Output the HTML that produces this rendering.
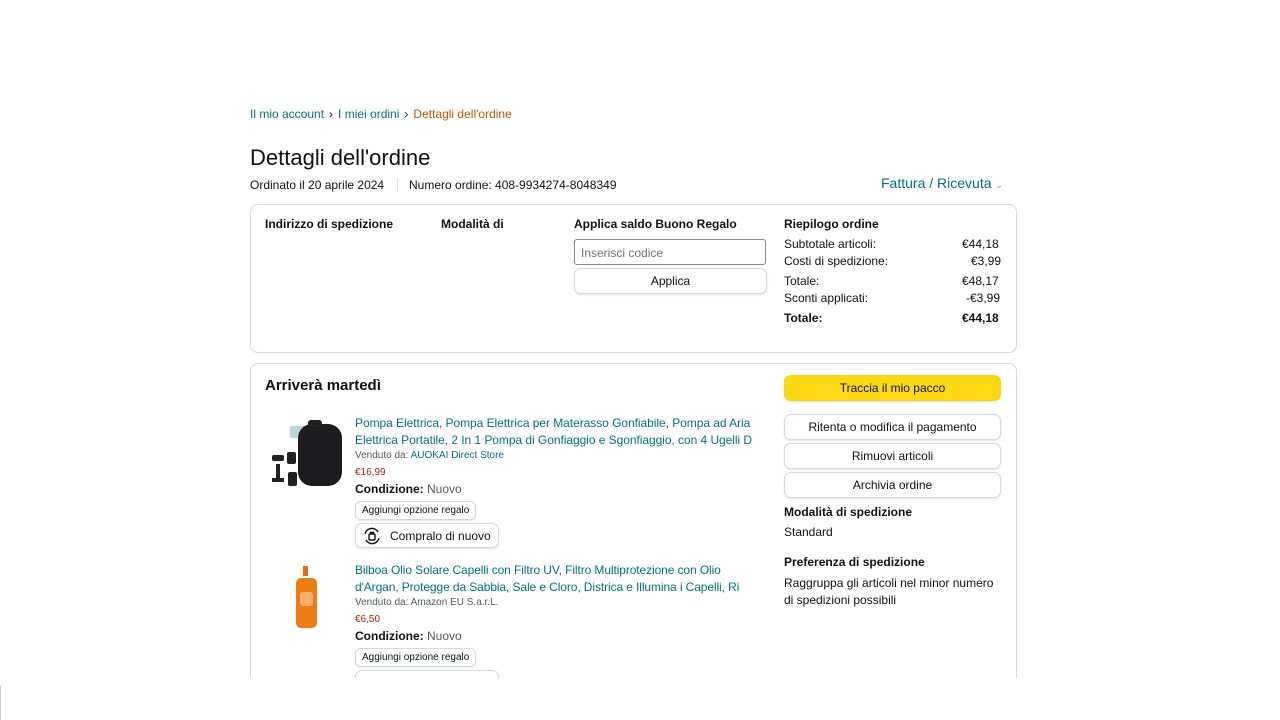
<!DOCTYPE html>
<html><head><meta charset="utf-8"><style>
*{box-sizing:border-box;margin:0;padding:0}
body{width:1280px;height:720px;background:#fff;font-family:"Liberation Sans",Arial,sans-serif;color:#0f1111;position:relative;overflow:hidden;font-size:12px}
.a{position:absolute;white-space:nowrap}
.link{color:#007185}
.box{position:absolute;border:1px solid #d5d9d9;border-radius:8px;background:#fff}
.btn{position:absolute;border:1px solid #d5d9d9;border-radius:7px;background:#fff;text-align:center;font-size:12px;box-shadow:0 1px 2px rgba(15,17,17,.12)}
.b{font-weight:bold}
.pill{position:absolute;border:1px solid #d5d9d9;border-radius:6px;font-size:10px;padding:3px 6px;box-shadow:0 1px 2px rgba(15,17,17,.1)}
.sep{margin:0 5px}
</style></head><body>
<div class="a" style="left:250px;top:107px;font-size:12px"><span class="link">Il mio account</span><span class="sep">›</span><span class="link">I miei ordini</span><span class="sep">›</span><span style="color:#c45500">Dettagli dell'ordine</span></div>
<div class="a" style="left:250px;top:145px;font-size:22px">Dettagli dell'ordine</div>
<div class="a" style="left:250px;top:178px;font-size:12px">Ordinato il 20 aprile 2024</div>
<div class="a" style="left:397px;top:178px;width:1px;height:14px;background:#ddd"></div>
<div class="a" style="left:409px;top:178px;font-size:12px">Numero ordine: 408-9934274-8048349</div>
<div class="a link" style="left:881px;top:175px;font-size:14px">Fattura / Ricevuta <span style="color:#888;font-size:9px">⌄</span></div>

<div class="box" style="left:250px;top:204px;width:767px;height:149px"></div>
<div class="a b" style="left:265px;top:217px">Indirizzo di spedizione</div>
<div class="a b" style="left:441px;top:217px">Modalità di</div>
<div class="a b" style="left:574px;top:217px">Applica saldo Buono Regalo</div>
<div class="a" style="left:574px;top:239px;width:192px;height:26px;border:1px solid #888c8c;border-radius:3px;padding:6px 6px;color:#6f7373;font-size:12px">Inserisci codice</div>
<div class="btn" style="left:574px;top:268px;width:193px;height:26px;line-height:25px">Applica</div>
<div class="a b" style="left:784px;top:217px">Riepilogo ordine</div>
<div class="a" style="left:784px;top:237px">Subtotale articoli:</div><div class="a" style="left:962px;top:237px">€44,18</div>
<div class="a" style="left:784px;top:254px">Costi di spedizione:</div><div class="a" style="left:971px;top:254px">€3,99</div>
<div class="a" style="left:784px;top:274px">Totale:</div><div class="a" style="left:962px;top:274px">€48,17</div>
<div class="a" style="left:784px;top:291px">Sconti applicati:</div><div class="a" style="left:966px;top:291px">-€3,99</div>
<div class="a b" style="left:784px;top:311px">Totale:</div><div class="a b" style="left:962px;top:311px">€44,18</div>

<div class="box" style="left:250px;top:363px;width:767px;height:340px"></div>
<div class="a b" style="left:265px;top:377px;font-size:15px">Arriverà martedì</div>
<div class="btn" style="left:784px;top:375px;width:217px;height:26px;line-height:25px;background:#ffd814;border-color:#fcd200">Traccia il mio pacco</div>
<div class="btn" style="left:784px;top:414px;width:217px;height:26px;line-height:25px">Ritenta o modifica il pagamento</div>
<div class="btn" style="left:784px;top:443px;width:217px;height:26px;line-height:25px">Rimuovi articoli</div>
<div class="btn" style="left:784px;top:472px;width:217px;height:26px;line-height:25px">Archivia ordine</div>
<div class="a b" style="left:784px;top:505px">Modalità di spedizione</div>
<div class="a" style="left:784px;top:525px">Standard</div>
<div class="a b" style="left:784px;top:555px">Preferenza di spedizione</div>
<div class="a" style="left:784px;top:575px;line-height:17px">Raggruppa gli articoli nel minor numero<br>di spedizioni possibili</div>

<svg class="a" style="left:268px;top:416px" width="76" height="76" viewBox="0 0 76 76">
<rect x="22" y="10" width="14" height="12" fill="#8bc" opacity=".6"/>
<rect x="30" y="8" width="44" height="62" rx="14" fill="#1d1d1f"/>
<rect x="40" y="4" width="14" height="7" rx="3" fill="#222"/>
<rect x="4" y="39" width="12" height="6" rx="2" fill="#222"/>
<rect x="19" y="36" width="9" height="12" rx="2" fill="#222"/>
<rect x="8" y="48" width="4" height="16" fill="#222"/>
<rect x="4" y="62" width="12" height="4" fill="#222"/>
<rect x="20" y="56" width="9" height="14" rx="2" fill="#222"/>
</svg>
<div class="a link" style="left:355px;top:415px;line-height:17px;letter-spacing:-0.05px">Pompa Elettrica, Pompa Elettrica per Materasso Gonfiabile, Pompa ad Aria<br>Elettrica Portatile, 2 In 1 Pompa di Gonfiaggio e Sgonfiaggio, con 4 Ugelli D</div>
<div class="a" style="left:355px;top:450px;font-size:10px;color:#565959">Venduto da: <span class="link">AUOKAI Direct Store</span></div>
<div class="a" style="left:355px;top:467px;font-size:10px;color:#b12704">€16,99</div>
<div class="a" style="left:355px;top:482px"><b>Condizione:</b> <span style="color:#565959">Nuovo</span></div>
<div class="pill" style="left:355px;top:501px">Aggiungi opzione regalo</div>
<div class="btn" style="left:355px;top:523px;width:144px;height:25px;line-height:24px;text-align:left;padding-left:34px;font-size:12px">Compralo di nuovo</div>
<svg class="a" style="left:362px;top:526px" width="20" height="20" viewBox="0 0 20 20" fill="none" stroke="#111" stroke-width="1.4"><path d="M3 8a7 7 0 0 1 13-2M17 12a7 7 0 0 1-13 2"/><rect x="7" y="8" width="6" height="6" rx="1"/><path d="M8.5 8V6.5h3V8"/></svg>

<svg class="a" style="left:294px;top:564px" width="26" height="68" viewBox="0 0 26 68">
<rect x="9" y="2" width="5" height="10" fill="#e66a10"/>
<rect x="2" y="14" width="21" height="50" rx="5" fill="#f07a14"/>
<rect x="6" y="28" width="13" height="14" rx="3" fill="#f8b070"/>
</svg>
<div class="a link" style="left:355px;top:562px;line-height:17px;letter-spacing:-0.1px">Bilboa Olio Solare Capelli con Filtro UV, Filtro Multiprotezione con Olio<br>d'Argan, Protegge da Sabbia, Sale e Cloro, Districa e Illumina i Capelli, Ri</div>
<div class="a" style="left:355px;top:597px;font-size:10px;color:#565959">Venduto da: Amazon EU S.a.r.L.</div>
<div class="a" style="left:355px;top:614px;font-size:10px;color:#b12704">€6,50</div>
<div class="a" style="left:355px;top:629px"><b>Condizione:</b> <span style="color:#565959">Nuovo</span></div>
<div class="pill" style="left:355px;top:648px">Aggiungi opzione regalo</div>
<div class="btn" style="left:355px;top:670px;width:144px;height:25px"></div>
<div class="a" style="left:0;top:678px;width:1280px;height:42px;background:#fff"></div>
<div class="a" style="left:0;top:686px;width:1px;height:34px;background:#ccc"></div>
</body></html>
